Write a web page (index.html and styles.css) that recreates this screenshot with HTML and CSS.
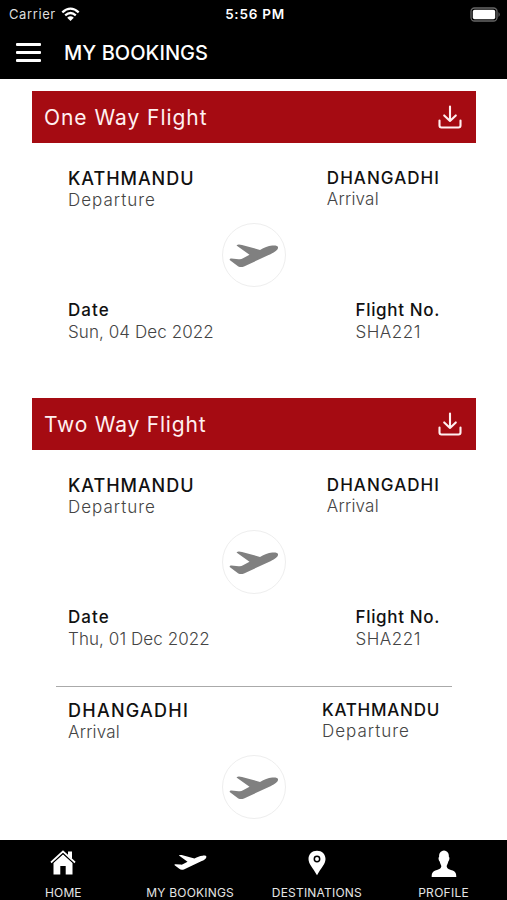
FILE: index.html
```html
<!DOCTYPE html>
<html lang="en">
<head>
  <meta charset="UTF-8">
  <meta name="viewport" content="width=device-width, initial-scale=1">
  <title>My Bookings</title>
  <link rel="stylesheet" href="styles.css">
</head>
<body>

<!-- shared icons -->
<svg class="sprite" width="0" height="0">
  <symbol id="plane" viewBox="0 0 50 24">
    <path d="M7.5 1.4C8.8 .2 11 .6 13 1L31 5.9C35.5 3.9 39 1.5 43.500 1.600C47 1.400 49.500 2 49 4C48.500 6.500 45 8.500 42 9.900L15 22.500C12.500 23.500 10 23.300 8 21.600L1 16.200C.2 15 1 14.500 2.500 14.500L9.500 15.200C11.500 15.500 12.500 15.200 14 14.300L20.500 10.800Z"/>
  </symbol>
  <symbol id="download" viewBox="0 0 24 24">
    <path d="M12 1.500V16M6.200 10.400L12 16L17.800 10.400M1.500 15.500V20.500Q1.500 22.500 3.500 22.500H20.500Q22.500 22.500 22.500 20.500V15.500" fill="none" stroke="currentColor" stroke-width="2.100" stroke-linecap="round" stroke-linejoin="round"/>
  </symbol>
</svg>

<div class="app">
  <header class="header">
    <div class="status">
      <div class="carrier">
        <span>Carrier</span>
        <svg width="19" height="15" viewBox="0 0 19 15">
          <path d="M1.300 5.300Q9.500-2 17.700 5.300M4.200 8.300Q9.500 3.700 14.800 8.300" fill="none" stroke="#fff" stroke-width="2.300"/>
          <path d="M6.200 10.700Q9.500 8 12.800 10.700L9.500 14Z" fill="#fff"/>
        </svg>
      </div>
      <div class="time">5:56 PM</div>
      <svg class="battery" width="31" height="15" viewBox="0 0 31 15">
        <rect x="1" y="1" width="26" height="13" rx="3.500" fill="none" stroke="#666" stroke-width="1.300"/>
        <rect x="2.800" y="2.800" width="22.400" height="9.400" rx="1.800" fill="#fff"/>
        <path d="M28.500 5Q31 7.500 28.500 10Z" fill="#666"/>
      </svg>
    </div>
    <div class="title-bar">
      <div class="menu"><i></i><i></i><i></i></div>
      <h1>MY BOOKINGS</h1>
    </div>
  </header>

  <main class="bookings">
    <section class="booking">
      <div class="booking-head">
        <h2 class="one-way">One Way Flight</h2>
        <svg class="download"><use href="#download"/></svg>
      </div>
      <div class="leg">
        <div class="row cities">
          <div><b class="ktm">KATHMANDU</b><span class="departure">Departure</span></div>
          <div class="to"><b class="dhi">DHANGADHI</b><span class="arrival">Arrival</span></div>
        </div>
        <div class="circle"><svg><use href="#plane"/></svg></div>
        <div class="row">
          <div><b class="label-date">Date</b><span class="date">Sun, 04 Dec 2022</span></div>
          <div><b class="label-flight">Flight No.</b><span class="flight">SHA221</span></div>
        </div>
      </div>
    </section>

    <section class="booking">
      <div class="booking-head">
        <h2 class="two-way">Two Way Flight</h2>
        <svg class="download"><use href="#download"/></svg>
      </div>
      <div class="leg">
        <div class="row cities">
          <div><b class="ktm">KATHMANDU</b><span class="departure">Departure</span></div>
          <div class="to"><b class="dhi">DHANGADHI</b><span class="arrival">Arrival</span></div>
        </div>
        <div class="circle"><svg><use href="#plane"/></svg></div>
        <div class="row">
          <div><b class="label-date">Date</b><span class="date">Thu, 01 Dec 2022</span></div>
          <div><b class="label-flight">Flight No.</b><span class="flight">SHA221</span></div>
        </div>
      </div>
      <hr>
      <div class="leg return">
        <div class="row cities">
          <div><b class="dhi">DHANGADHI</b><span class="arrival">Arrival</span></div>
          <div class="to"><b class="ktm">KATHMANDU</b><span class="departure">Departure</span></div>
        </div>
        <div class="circle"><svg><use href="#plane"/></svg></div>
      </div>
    </section>
  </main>

  <nav class="tabs">
    <div class="tab">
      <svg width="26" height="26" viewBox="0 0 26 26">
        <path d="M13 4.300L22.500 13V24.500H15.700V16H10.300V24.500H3.500V13Z" fill="#fff"/>
        <path d="M1 12.500L13 1.500L25 12.500" fill="none" stroke="#fff" stroke-width="1.700"/>
        <path d="M18 1.500H22V9L18 5.400Z" fill="#fff"/>
        <path d="M2.500 13.200L13 3.700L23.500 13.200" fill="none" stroke="#000" stroke-width=".8"/>
      </svg>
      <span>HOME</span>
    </div>
    <div class="tab">
      <svg class="tab-plane" width="33" height="25"><use href="#plane"/></svg>
      <span class="tab-bookings">MY BOOKINGS</span>
    </div>
    <div class="tab">
      <svg width="26" height="26" viewBox="0 0 26 26">
        <path d="M13 .8C8 .8 4.500 4.300 4.500 9C4.500 14 9 18 13 25.200C17 18 21.500 14 21.500 9C21.500 4.300 18 .8 13 .8Z" fill="#fff"/>
        <circle cx="13" cy="9" r="2.700" fill="#fff" stroke="#000" stroke-width="1.500"/>
      </svg>
      <span class="tab-dest">DESTINATIONS</span>
    </div>
    <div class="tab">
      <svg width="26" height="28" viewBox="0 0 26 28">
        <path d="M13 .5C16.500 1 18 3 17.900 7C19 7.500 18.300 10.500 17.300 11.500C17 13.500 16 14.500 15.700 16C15.600 18.500 18 19.300 21 20.300C24.500 21.500 25.300 23.500 25.300 27H.7C.7 23.500 1.500 21.500 5 20.300C8 19.300 10.400 18.500 10.300 16C10 14.500 9 13.500 8.700 11.500C7.700 10.500 7 7.500 8.100 7C8 3 9.500 1 13 .5Z" fill="#fff"/>
      </svg>
      <span class="tab-profile">PROFILE</span>
    </div>
  </nav>
</div>

</body>
</html>
```
FILE: styles.css
```css
* {
  box-sizing: border-box;
}

body {
  margin: 0;
  font-family: Inter, sans-serif;
  background: #fff;
  color: #111;
}

.sprite {
  display: block;
}

.app {
  height: 900px;
  display: flex;
  flex-direction: column;
  overflow: hidden;
}

.header {
  height: 79px;
  background: #000;
  color: #fff;
  flex-shrink: 0;
}

.status {
  height: 28px;
  display: grid;
  grid-template-columns: 1fr auto 1fr;
  align-items: center;
  padding: 0 6px 0 9px;
  font-size: 13px;
}

.carrier {
  display: flex;
  align-items: center;
  gap: 5px;
  color: #ddd;
  letter-spacing: .6px;
}

.time {
  font-size: 13.5px;
  font-weight: 600;
  letter-spacing: .75px;
}

.battery {
  justify-self: end;
}

.title-bar {
  height: 49px;
  display: flex;
  align-items: center;
  padding-left: 16px;
  gap: 23px;
}

.menu {
  width: 25px;
  display: flex;
  flex-direction: column;
  gap: 5.5px;
}

.menu i {
  height: 2.5px;
  background: #fff;
  border-radius: 1px;
}

h1 {
  margin: 0;
  font-size: 20px;
  font-weight: 500;
  letter-spacing: .05px;
}

.bookings {
  flex: 1;
  padding: 12px 31px 0 32px;
}

.booking {
  height: 307px;
}

.booking-head {
  height: 52px;
  padding: 0 14px 0 12px;
  display: flex;
  align-items: center;
  justify-content: space-between;
  background: #a50b12;
  color: #fff0f0;
}

h2 {
  margin: 0;
  font-size: 21px;
  font-weight: 400;
}

.one-way {
  letter-spacing: .95px;
}

.two-way {
  letter-spacing: .8px;
}

.download {
  width: 24px;
  height: 24px;
}

.leg {
  padding: 25px 37px 0 36px;
}

.row {
  display: flex;
  justify-content: space-between;
}

.row b,
.row span {
  display: block;
  line-height: 22px;
  white-space: nowrap;
}

.row b {
  font-size: 17px;
  font-weight: 500;
}

.cities b {
  font-size: 18px;
}

.cities .to b {
  font-size: 17px;
}

.row span {
  font-size: 17px;
  font-weight: 300;
  color: #444;
}

.cities span {
  margin-top: -1px;
}

.to {
  margin-top: -1px;
}

/* tracking, the negative margin drops the space after the last letter */
.ktm {
  letter-spacing: .95px;
}

.dhi {
  letter-spacing: 1.25px;
}

.to .ktm {
  letter-spacing: .75px;
  margin-right: -1px;
}

.to .dhi {
  letter-spacing: 1.05px;
  margin-right: -1px;
}

.departure {
  letter-spacing: 1px;
}

.arrival {
  letter-spacing: .2px;
}

.label-date {
  letter-spacing: 1.1px;
}

.label-flight {
  letter-spacing: .65px;
  margin-right: -1px;
}

.date {
  letter-spacing: .08px;
}

.flight {
  letter-spacing: .5px;
}

.circle {
  width: 64px;
  height: 64px;
  margin: 12px auto;
  border: 1px solid #eee;
  border-radius: 50%;
  display: flex;
  justify-content: center;
  padding-top: 20px;
}

.circle svg {
  width: 50px;
  height: 24px;
  fill: #808080;
}

hr {
  width: 396px;
  margin: 36px auto 0;
  border: 0;
  border-top: 1px solid #aaa;
}

.return {
  padding-top: 13px;
}

.tabs {
  height: 60px;
  flex-shrink: 0;
  display: grid;
  grid-template-columns: repeat(4, 1fr);
  background: #000;
  color: #e5e5e5;
}

.tab {
  display: flex;
  flex-direction: column;
  align-items: center;
  justify-content: space-between;
  padding-top: 10px;
  font-size: 12px;
  letter-spacing: .1px;
}

.tab span {
  line-height: 15px;
}

.tab-bookings,
.tab-dest {
  letter-spacing: .2px;
}

.tab-profile {
  letter-spacing: .3px;
}

.tab-plane {
  fill: #fff;
}
```
